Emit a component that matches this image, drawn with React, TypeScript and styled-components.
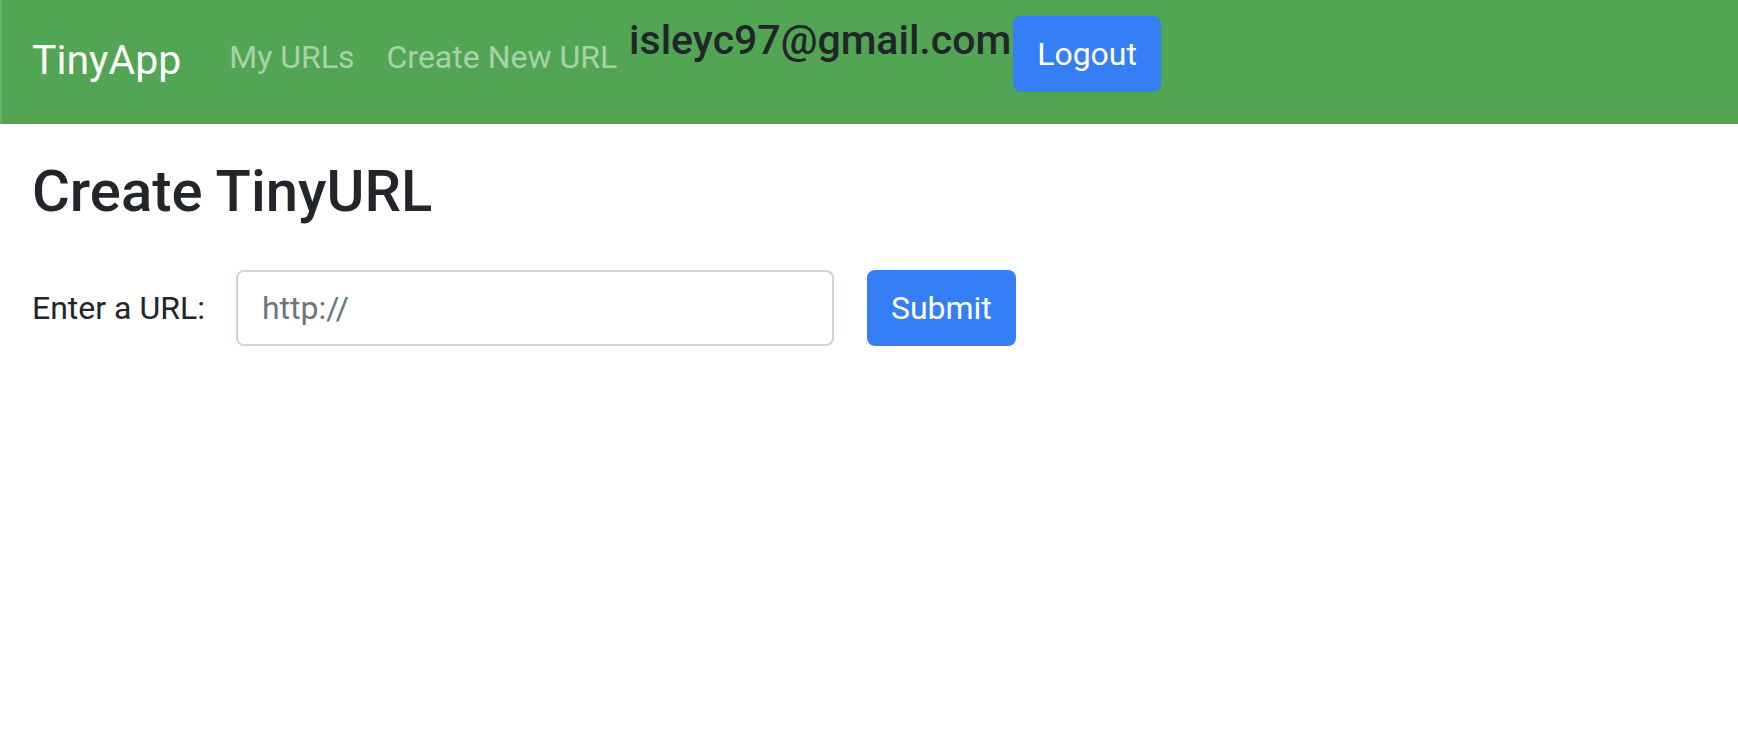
import React from "react";
import styled, { createGlobalStyle } from "styled-components";

const GlobalStyle = createGlobalStyle`
  html, body {
    margin: 0;
    padding: 0;
    background: #ffffff;
  }
  body {
    font-family: Roboto, "Liberation Sans", Arial, sans-serif;
    color: #222529;
    -webkit-font-smoothing: antialiased;
  }
  * { box-sizing: border-box; }
`;

const Navbar = styled.nav`
  display: flex;
  align-items: flex-start;
  min-height: 124px;
  padding: 16px 32px 16px 30px;
  background: #52a552;
  border-left: 2px solid #6cb06a;
`;

const Brand = styled.a`
  display: block;
  margin-top: 4px;
  margin-right: 32px;
  padding: 10px 0;
  font-size: 41px;
  line-height: 60px;
  color: #ffffff;
  text-decoration: none;
  white-space: nowrap;
`;

const NavList = styled.ul`
  display: flex;
  margin: 1px 0 0;
  padding: 0;
  list-style: none;
`;

const NavLink = styled.a`
  display: block;
  padding: 16px;
  font-size: 32px;
  line-height: 48px;
  color: rgba(255, 255, 255, 0.5);
  text-decoration: none;
  white-space: nowrap;
`;

const UserEmail = styled.h5`
  margin: 0 0 0 -4px;
  font-size: 41px;
  font-weight: 500;
  line-height: 48px;
  color: #222529;
  white-space: nowrap;
`;

const Button = styled.button`
  display: inline-block;
  height: 76px;
  padding: 12px 22px;
  font-family: inherit;
  font-size: 32px;
  line-height: 48px;
  color: #ffffff;
  background: #357ff6;
  border: 2px solid #357ff6;
  border-radius: 8px;
  cursor: pointer;
  white-space: nowrap;
`;

const LogoutButton = styled(Button)`
  margin-left: 2px;
`;

const Main = styled.main`
  padding: 33px 32px 0;
`;

const Title = styled.h1`
  margin: 0 0 43px;
  font-size: 58px;
  font-weight: 500;
  line-height: 1.2;
  color: #222529;
`;

const Form = styled.form`
  display: flex;
  align-items: center;
`;

const Label = styled.label`
  margin-right: 31px;
  font-size: 32px;
  line-height: 48px;
  color: #222529;
`;

const UrlInput = styled.input`
  width: 598px;
  height: 76px;
  padding: 12px 24px;
  margin-right: 33px;
  font-family: inherit;
  font-size: 32px;
  line-height: 48px;
  color: #495057;
  background: #ffffff;
  border: 2px solid #ced3d9;
  border-radius: 8px;
  outline: none;

  &::placeholder {
    color: #6c757d;
    opacity: 1;
  }
`;

export default function App() {
  return (
    <>
      <GlobalStyle />
      <Navbar>
        <Brand href="#">TinyApp</Brand>
        <NavList>
          <li>
            <NavLink href="#">My URLs</NavLink>
          </li>
          <li>
            <NavLink href="#">Create New URL</NavLink>
          </li>
        </NavList>
        <UserEmail>isleyc97@gmail.com</UserEmail>
        <LogoutButton type="button">Logout</LogoutButton>
      </Navbar>
      <Main>
        <Title>Create TinyURL</Title>
        <Form onSubmit={(e) => e.preventDefault()}>
          <Label htmlFor="longURL">Enter a URL:</Label>
          <UrlInput id="longURL" type="text" name="longURL" placeholder="http://" />
          <Button type="submit">Submit</Button>
        </Form>
      </Main>
    </>
  );
}
